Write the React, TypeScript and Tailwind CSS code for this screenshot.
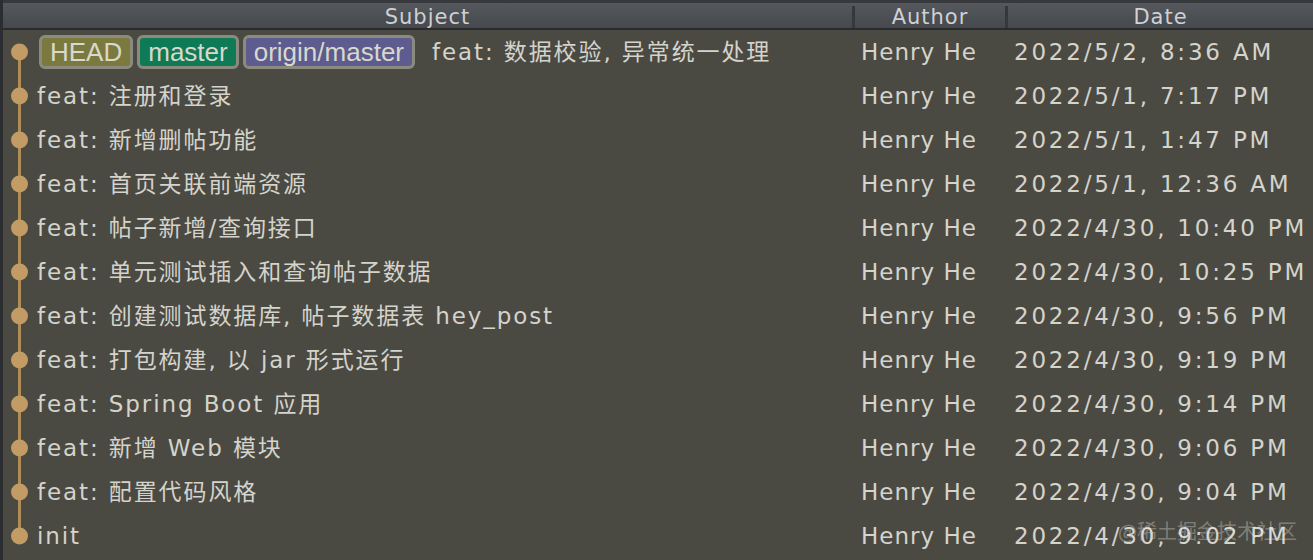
import React from "react";

type Commit = {
  subject: string;
  author: string;
  date: string;
  refs?: { label: string; className: string }[];
};

const commits: Commit[] = [
  {
    subject: "feat: 数据校验, 异常统一处理",
    author: "Henry He",
    date: "2022/5/2, 8:36 AM",
    refs: [
      { label: "HEAD", className: "bg-[#7b7a3e]" },
      { label: "master", className: "bg-[#0f7a56]" },
      { label: "origin/master", className: "bg-[#5e5b8f]" },
    ],
  },
  { subject: "feat: 注册和登录", author: "Henry He", date: "2022/5/1, 7:17 PM" },
  { subject: "feat: 新增删帖功能", author: "Henry He", date: "2022/5/1, 1:47 PM" },
  { subject: "feat: 首页关联前端资源", author: "Henry He", date: "2022/5/1, 12:36 AM" },
  { subject: "feat: 帖子新增/查询接口", author: "Henry He", date: "2022/4/30, 10:40 PM" },
  { subject: "feat: 单元测试插入和查询帖子数据", author: "Henry He", date: "2022/4/30, 10:25 PM" },
  { subject: "feat: 创建测试数据库, 帖子数据表 hey_post", author: "Henry He", date: "2022/4/30, 9:56 PM" },
  { subject: "feat: 打包构建, 以 jar 形式运行", author: "Henry He", date: "2022/4/30, 9:19 PM" },
  { subject: "feat: Spring Boot 应用", author: "Henry He", date: "2022/4/30, 9:14 PM" },
  { subject: "feat: 新增 Web 模块", author: "Henry He", date: "2022/4/30, 9:06 PM" },
  { subject: "feat: 配置代码风格", author: "Henry He", date: "2022/4/30, 9:04 PM" },
  { subject: "init", author: "Henry He", date: "2022/4/30, 9:02 PM" },
];

const textFont = "font-['DejaVu_Sans','Noto_Sans_CJK_SC',sans-serif]";

function GraphCell({ first, last }: { first: boolean; last: boolean }) {
  return (
    <div className="relative w-[34px] h-full shrink-0">
      {!first && <div className="absolute left-[15px] top-0 h-1/2 w-[3px] bg-[#b08d57]" />}
      {!last && <div className="absolute left-[15px] top-1/2 h-1/2 w-[3px] bg-[#b08d57]" />}
      <div className="absolute left-[8px] top-1/2 -translate-y-1/2 w-[17px] h-[17px] rounded-full bg-[#c29c64]" />
    </div>
  );
}

export default function App() {
  return (
    <div className={`relative w-[1313px] h-[560px] overflow-hidden bg-[#4b4a42] border-l-[3px] border-[#2c2d30] ${textFont}`}>
      {/* Column header */}
      <div className="flex h-[30px] pt-[3px] border-t-[3px] border-t-[#38393c] border-b-[2px] border-b-[#2a2b2e] bg-gradient-to-b from-[#55585d] to-[#45484c] text-[21px] leading-none tracking-[1px] text-[#cfd0d3]">
        <div className="w-[849px] flex items-center justify-center">Subject</div>
        <div className="w-[153px] flex items-center justify-center border-l-[3px] border-[#36383b]">Author</div>
        <div className="flex-1 flex items-center justify-center border-l-[3px] border-[#36383b]">Date</div>
      </div>

      {/* Commit rows */}
      <div className="flex flex-col">
        {commits.map((c, i) => (
          <div key={i} className="flex items-center h-[44px] text-[#d4d3cc]">
            <GraphCell first={i === 0} last={i === commits.length - 1} />
            <div className="w-[815px] flex items-center gap-[4px] text-[23px] tracking-[1.9px] whitespace-nowrap">
              {c.refs &&
                c.refs.map((r, j) => (
                  <span
                    key={r.label}
                    className={`${r.className} ${j === 0 ? "ml-[2px]" : ""} h-[34px] px-[8px] flex items-center rounded-[6px] border-[3px] border-[#8b8a7f] font-['Liberation_Sans',sans-serif] text-[26px] tracking-normal text-[#d8d8cc]`}
                  >
                    {r.label}
                  </span>
                ))}
              <span className={c.refs ? "ml-[13px]" : ""}>{c.subject}</span>
            </div>
            <div className="w-[153px] pl-[9px] text-[23px] tracking-[1px] whitespace-nowrap">{c.author}</div>
            <div className="flex-1 pl-[9px] text-[23px] tracking-[2.8px] whitespace-nowrap">{c.date}</div>
          </div>
        ))}
      </div>

      {/* Watermark */}
      <div className="absolute right-[16px] bottom-[14px] text-[20px] text-white/30 font-['Noto_Sans_CJK_SC',sans-serif] pointer-events-none">
        @稀土掘金技术社区
      </div>
    </div>
  );
}
